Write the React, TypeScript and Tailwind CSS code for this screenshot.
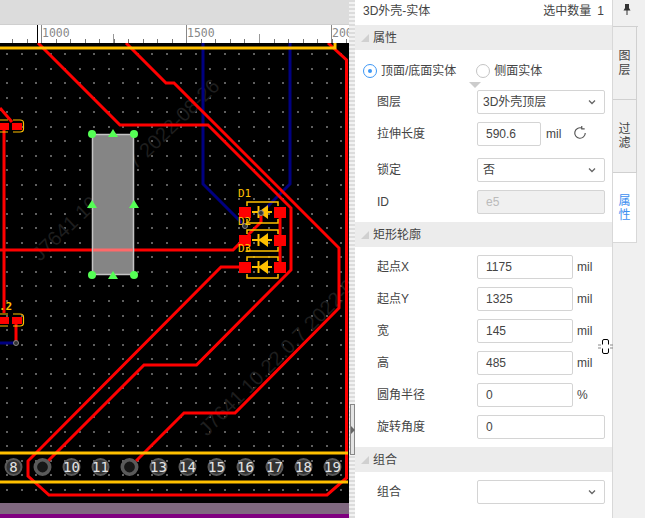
import type { ReactNode } from "react";

const FONT = "font-['Liberation_Sans','Noto_Sans_CJK_SC',sans-serif]";

const red = "#ff0000";
const yellow = "#ffc000";

// board grid, in page pixels
const grid: [number, number][] = [];
for (let i = 0; i < 24; i++) {
  for (let j = 0; j < 32; j++) {
    grid.push([Math.round(6 + i * 14.53), Math.round(53 + j * 14.53)]);
  }
}

const traces = [
  "M38,43 L120,125 L208,125 L291,208 L291,270 L196.5,365 L144,365 L48,461",
  "M126,43 L166,83 L174,83 L339,248 L339,308 L235,413 L184,413 L136,461",
  "M328,43 L346.5,60 L346.5,478 L327,495 L49,495 L28,476 L28,461 L221,267 L243,267",
  "M4,128 L4,313",
  "M0,250 L233,250 L243,240",
  "M0,108 L12,122",
  "M16,320 L16,343",
  "M280,212 L280,267",
  "M261,213 L261,222 L248,235",
];

const pins = ["8", "", "10", "11", "", "13", "14", "15", "16", "17", "18", "19"];

function Canvas() {
  return (
    <svg width="349" height="475" viewBox="0 43 349 475" className="block">
      <rect y="43" width="349" height="475" fill="#000" />
      {grid.map(([x, y]) => (
        <rect key={`${x}-${y}`} x={x} y={y} width="2" height="2" fill="#5f5f5f" />
      ))}
      <g fill="#1e1e1e" fontSize="20" className="font-['Liberation_Sans']">
        <text x="40" y="262" transform="rotate(-44 40 262)">J7641 10.22.0.7 2022-08-26</text>
        <text x="207" y="437" transform="rotate(-45 207 437)">J7641 10.22.0.7 2022-08-26</text>
      </g>
      <g fill="none" stroke="#000080" strokeWidth="3">
        <path d="M203,43 L203,184 L245,226" />
        <path d="M290,43 L290,184 L261,213" />
        <path d="M0,343 L16,343" />
      </g>
      <g fill="none" stroke={red} strokeWidth="3">
        {traces.map((d) => (
          <path key={d} d={d} />
        ))}
      </g>
      <path d="M0,48 L335,48 L335,43" fill="none" stroke={yellow} strokeWidth="3" />

      {/* rect being edited */}
      <rect x="92.5" y="134.5" width="41" height="140" fill="#858585" stroke="#c4c4c4" strokeWidth="1.5" />
      <path d="M93,250 H133" stroke="#ff6a6a" strokeWidth="3" />
      <g fill="#55ff55">
        <circle cx="92" cy="134" r="4" />
        <circle cx="134" cy="134" r="4" />
        <circle cx="92" cy="275" r="4" />
        <circle cx="134" cy="275" r="4" />
        <path d="M113,129 L118,137 L108,137 Z" />
        <path d="M113,271 L118,279 L108,279 Z" />
        <path d="M92,200 L97,208 L87,208 Z" />
        <path d="M134,200 L139,208 L129,208 Z" />
      </g>

      {/* left pads */}
      {[126, 320].map((y) => (
        <g key={y}>
          <rect x="0" y={y - 3} width="9" height="7" fill={red} />
          <rect x="12" y={y - 3} width="10" height="7" fill={red} />
          <path
            d={`M13,${y - 6} H20 Q23.5,${y - 6} 23.5,${y - 3} V${y + 3} Q23.5,${y + 6} 20,${y + 6} H13 M0,${y - 6} H8 M0,${y + 6} H8`}
            fill="none"
            stroke={yellow}
            strokeWidth="1.2"
          />
        </g>
      ))}
      <text x="-1" y="310" fill={yellow} fontSize="11" fontWeight="bold" className="font-['DejaVu_Sans_Mono']">
        .2
      </text>
      <circle cx="16" cy="343" r="2.5" fill="#333" stroke="#888" />

      {/* diodes */}
      {[212, 240, 267].map((y) => (
        <g key={y}>
          <path
            d={`M247,${y - 6} V${y - 10} H278 V${y - 6} M247,${y + 7} V${y + 11} H278 V${y + 7}`}
            fill="none"
            stroke={yellow}
            strokeWidth="1.5"
          />
          <rect x="239" y={y - 5} width="12" height="11" fill={red} />
          <rect x="274" y={y - 5} width="12" height="11" fill={red} />
          <path
            d={`M252,${y} H272 M267,${y - 5} L260,${y} L267,${y + 5} Z M258.5,${y - 6} V${y + 6}`}
            fill={yellow}
            stroke={yellow}
            strokeWidth="2"
          />
        </g>
      ))}
      <circle cx="261" cy="213" r="2.5" fill="#333" stroke="#888" />
      <circle cx="245" cy="226" r="2.5" fill="#333" stroke="#888" />
      <g fill={yellow} fontSize="11" className="font-['DejaVu_Sans_Mono']">
        <text x="238" y="197">D1</text>
        <text x="238" y="225">D2</text>
        <text x="238" y="252">D3</text>
      </g>

      {/* header */}
      <path d="M0,453 H348 M0,482 H348" fill="none" stroke={yellow} strokeWidth="3" />
      {pins.map((p, i) => {
        const cx = 13.5 + i * 29;
        return (
          <g key={i}>
            <circle
              cx={cx}
              cy="467"
              r={p ? 8 : 7.2}
              fill={p ? "#333" : "#161616"}
              stroke="#5a5a5a"
              strokeWidth={p ? 2 : 3.6}
            />
            {p && (
              <text
                x={cx}
                y="472"
                fill="#e4e4e4"
                fontSize="14"
                textAnchor="middle"
                className="font-['DejaVu_Sans_Mono']"
              >
                {p}
              </text>
            )}
          </g>
        );
      })}
      <rect y="503" width="349" height="11" fill="#806880" />
      <rect y="514" width="349" height="4" fill="#800080" />
    </svg>
  );
}

function Ruler() {
  const ticks = Array.from({ length: 24 }, (_, i) => Math.round(12 + i * 14.53) + 0.5);
  return (
    <svg width="349" height="18" viewBox="0 25 349 18" className="block">
      <rect y="25" width="349" height="18" fill="#fff" />
      {ticks.map((x) => (
        <path key={x} d={`M${x},43 V39`} stroke="#777" />
      ))}
      <path d="M41.5,25 V43 M186.5,25 V43 M331.5,25 V43" stroke="#888" />
      <path d="M113.5,34 V43 M259.5,34 V43" stroke="#999" />
      <path d="M37.5,25 V43" stroke="#000" />
      <g fill="#888" fontSize="11.5" className="font-['DejaVu_Sans_Mono']">
        <text x="42" y="37">1000</text>
        <text x="187" y="37">1500</text>
        <text x="332" y="37">2000</text>
      </g>
    </svg>
  );
}

function Chevron() {
  return (
    <svg width="10" height="10" viewBox="0 0 10 10" className="shrink-0">
      <path d="M2,3.5 L5,6.5 L8,3.5" fill="none" stroke="#666" strokeWidth="1.3" />
    </svg>
  );
}

function Section({ title }: { title: string }) {
  return (
    <div className="flex h-[25px] shrink-0 items-center gap-[4px] bg-[#ececec] pl-[6px] text-[#444]">
      <span className="h-0 w-0 border-b-[8px] border-l-[8px] border-b-[#d0d0d0] border-l-transparent" />
      {title}
    </div>
  );
}

function Row({ label, children }: { label: string; children: ReactNode }) {
  return (
    <div className="flex h-[32px] shrink-0 items-center pl-[22px] text-[#444]">
      <span className="w-[100px] shrink-0">{label}</span>
      {children}
    </div>
  );
}

function SelectBox({ value }: { value: string }) {
  return (
    <div className="flex h-[24px] w-[128px] items-center justify-between rounded-[2px] border border-[#d4d4d4] bg-white pl-[5px] pr-[7px]">
      <span>{value}</span>
      <Chevron />
    </div>
  );
}

function NumberRow({ label, value, unit }: { label: string; value: string; unit: string }) {
  return (
    <Row label={label}>
      <div className="flex h-[24px] w-[96px] items-center rounded-[2px] border border-[#d4d4d4] bg-white pl-[8px]">
        {value}
      </div>
      <span className="ml-[4px]">{unit}</span>
    </Row>
  );
}

function Radio({ checked, label }: { checked?: boolean; label: string }) {
  return (
    <div className="flex items-center gap-[4px] text-[#444]">
      <span
        className={
          checked
            ? "flex h-[14px] w-[14px] items-center justify-center rounded-full border border-[#3d97f5]"
            : "flex h-[14px] w-[14px] items-center justify-center rounded-full border border-[#c4c4c4]"
        }
      >
        {checked && <span className="h-[4px] w-[4px] rounded-full bg-[#3d97f5]" />}
      </span>
      {label}
    </div>
  );
}

function Tab({ label, active }: { label: string; active?: boolean }) {
  return (
    <div
      className={
        active
          ? "flex h-[70px] w-[24px] items-center justify-center border-b border-r border-[#d8d8d8] bg-white leading-[14px] text-[#3d8ff0]"
          : "flex h-[73px] w-[24px] items-center justify-center border-b border-r border-[#d0d0d0] bg-[#f0f0f0] leading-[14px] text-[#444]"
      }
    >
      <span className="w-[12px] text-center">{label}</span>
    </div>
  );
}

export default function App() {
  return (
    <div className={`relative flex h-[518px] w-[645px] overflow-hidden bg-[#f0f0f0] text-[12px] ${FONT}`}>
      <div className="flex w-[349px] shrink-0 flex-col">
        <div className="h-[25px] shrink-0 border-b border-[#cfcfcf] bg-[#dcdcdc]" />
        <Ruler />
        <Canvas />
      </div>

      <div className="flex w-[6px] shrink-0 items-start justify-end bg-[repeating-linear-gradient(0deg,#dcdcdc_0_2px,#f2f2f2_2px_4px)] pt-[404px]">
        <div className="flex h-[51px] w-[5px] items-center border border-[#888] bg-[#e4e4e4]">
          <span className="h-0 w-0 border-y-[4px] border-l-[4px] border-y-transparent border-l-[#666]" />
        </div>
      </div>

      <div className="flex w-[258px] shrink-0 flex-col border-r border-[#d8d8d8] bg-white text-[#444]">
        <div className="flex h-[25px] shrink-0 items-center justify-between pb-[4px] pl-[8px] pr-[8px]">
          <span>3D外壳-实体</span>
          <span>
            选中数量<span className="ml-[6px]">1</span>
          </span>
        </div>
        <Section title="属性" />
        <div className="relative flex h-[36px] shrink-0 items-start gap-[20px] pl-[8px] pt-[12px]">
          <Radio checked label="顶面/底面实体" />
          <Radio label="侧面实体" />
          <span className="absolute left-[114px] top-[32px] h-0 w-0 border-x-[6px] border-t-[6px] border-x-transparent border-t-[#ccc]" />
        </div>
        <Row label="图层">
          <SelectBox value="3D外壳顶层" />
        </Row>
        <Row label="拉伸长度">
          <div className="flex h-[24px] w-[64px] items-center rounded-[2px] border border-[#d4d4d4] bg-white pl-[8px]">
            590.6
          </div>
          <span className="ml-[5px]">mil</span>
          <svg width="14" height="14" viewBox="0 0 24 24" className="ml-[12px] -translate-y-[1px]">
            <path d="M21,12 A9,9 0 1 1 15,3.5 M15,0 V5 H20" fill="none" stroke="#555" strokeWidth="2" />
          </svg>
        </Row>
        <div className="h-[4px] shrink-0" />
        <Row label="锁定">
          <SelectBox value="否" />
        </Row>
        <Row label="ID">
          <div className="flex h-[24px] w-[128px] items-center rounded-[2px] border border-[#d4d4d4] bg-[#f0f0f0] pl-[8px] text-[#bbb]">
            e5
          </div>
        </Row>
        <div className="h-[4px] shrink-0" />
        <Section title="矩形轮廓" />
        <div className="h-[4px] shrink-0" />
        <NumberRow label="起点X" value="1175" unit="mil" />
        <NumberRow label="起点Y" value="1325" unit="mil" />
        <NumberRow label="宽" value="145" unit="mil" />
        <NumberRow label="高" value="485" unit="mil" />
        <NumberRow label="圆角半径" value="0" unit="%" />
        <Row label="旋转角度">
          <div className="flex h-[24px] w-[128px] items-center rounded-[2px] border border-[#d4d4d4] bg-white pl-[8px]">
            0
          </div>
        </Row>
        <div className="h-[4px] shrink-0" />
        <Section title="组合" />
        <div className="h-[4px] shrink-0" />
        <Row label="组合">
          <SelectBox value="" />
        </Row>
      </div>

      <div className="flex w-[32px] shrink-0 flex-col text-[#333]">
        <div className="flex h-[27px] items-start justify-center border-b border-[#d0d0d0] pr-[4px] pt-[4px] [border-image:linear-gradient(90deg,#d0d0d0_75%,transparent_75%)_1]">
          <svg width="8" height="11" viewBox="0 0 8 11">
            <path d="M2,0 H6 V4 L7.5,6.5 H4.5 V11 H3.5 V6.5 H0.5 L2,4 Z" fill="#333" />
          </svg>
        </div>
        <Tab label="图层" />
        <Tab label="过滤" />
        <Tab active label="属性" />
      </div>

      {/* faint watermark across the panel */}
      <div className="pointer-events-none absolute left-[530px] top-[110px] origin-left -rotate-45 whitespace-nowrap text-[20px] text-black/[0.025]">
        J7641 10.22.0.7
      </div>
      <div className="pointer-events-none absolute left-[490px] top-[490px] origin-left -rotate-45 whitespace-nowrap text-[20px] text-black/[0.025]">
        2022-08-26
      </div>

      {/* mouse cursor */}
      <svg width="16" height="17" viewBox="0 0 16 17" className="absolute left-[597px] top-[338px]">
        <path
          d="M5.5,6.5 V3 Q5.5,1.5 7,1.5 H10 Q11.5,1.5 11.5,3 V6.5 M5.5,10.5 V14 Q5.5,15.5 7,15.5 H10 Q11.5,15.5 11.5,14 V10.5"
          fill="#fff"
          stroke="#000"
        />
        <path d="M1,7 H4 M1,10 H4 M13,7 H16 M13,10 H16" stroke="#888" />
      </svg>
    </div>
  );
}
